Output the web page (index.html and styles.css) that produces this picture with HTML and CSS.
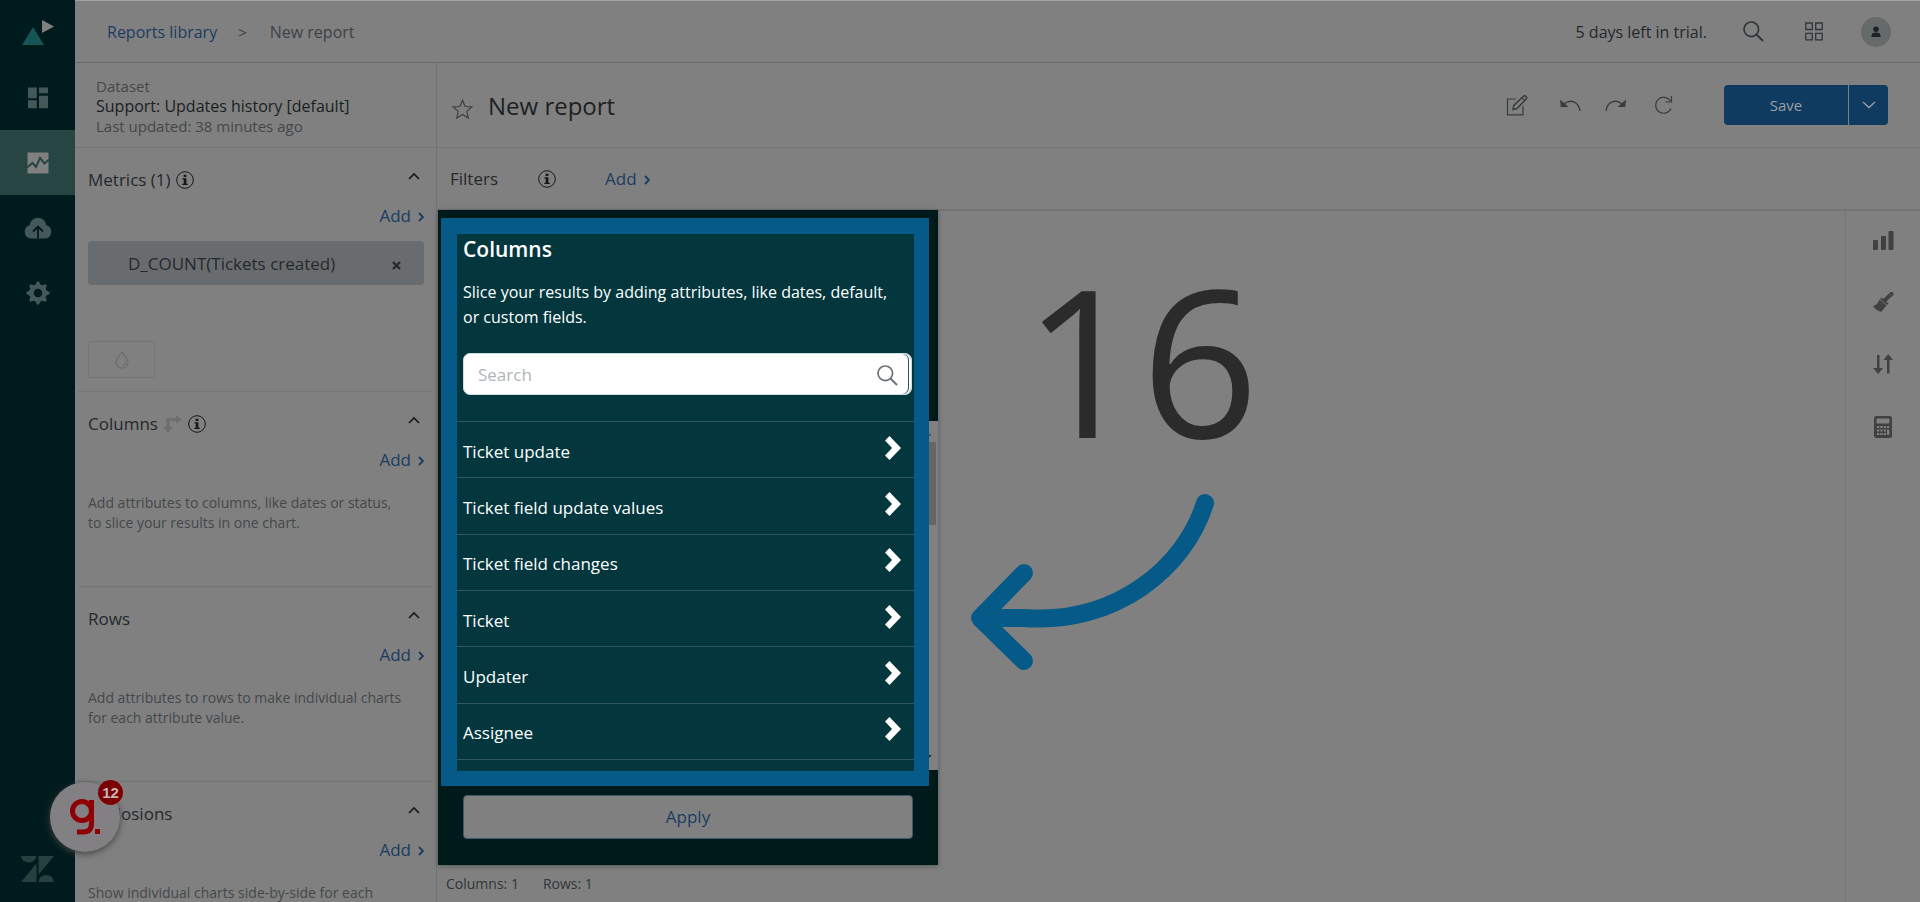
FILE: index.html
```html
<!DOCTYPE html>
<html lang="en">
<head>
<meta charset="utf-8">
<title>New report</title>
<link rel="stylesheet" href="styles.css">
</head>
<body>
<svg class="defs" aria-hidden="true">
  <symbol id="info" viewBox="0 0 18 18"><circle cx="9" cy="9" r="8.3" fill="none" stroke="currentColor"/><path d="M7.6 3.8h2.8v2.3H7.6zM6.4 7.3h4v5.4h1.4v1.2H6.3v-1.2h1.4V8.5H6.4z" fill="currentColor"/></symbol>
  <symbol id="up" viewBox="0 0 12 8"><path d="M1 7l5-5 5 5" fill="none" stroke="currentColor" stroke-width="1.6"/></symbol>
  <symbol id="next" viewBox="0 0 6 10"><path d="M1 1l4 4-4 4" fill="none" stroke="currentColor" stroke-width="1.9"/></symbol>
  <symbol id="bold-next" viewBox="0 0 16 24"><path d="M0 4.5L4.5 0 16 12 4.500 24 0 19.500 7 12z" fill="currentColor"/></symbol>
  <symbol id="search" viewBox="0 0 21 21"><circle cx="8.300" cy="8.300" r="7.300" fill="none" stroke="currentColor" stroke-width="1.700"/><path d="M13.500 13.500l6.500 6.500" stroke="currentColor" stroke-width="2"/></symbol>
</svg>

<nav class="rail" aria-label="Main">
  <a class="rail-logo" href="#" aria-label="Explore"><svg width="32" height="26" viewBox="0 0 32 26"><path d="M0 25L11 7l11 18z" fill="#155556"/><path d="M20 0l12 6.500-12 6.500z" fill="#808080"/></svg></a>
  <a class="rail-item" href="#" aria-label="Dashboards"><svg width="22" height="22" viewBox="0 0 22 22" fill="currentColor"><path d="M1 .5h8.800v10.700H1zM12 .5h9v5.800h-9zM1 13.300h8.800v8H1zM12 8.800h9v12.500h-9z"/></svg></a>
  <a class="rail-item active" href="#" aria-label="Reports"><svg width="22" height="22" viewBox="0 0 22 22"><path d="M.5.5h21v21H.5z" fill="#808080"/><path d="M0 15.500l5.500-4.500 3.500 4 4-9 4.500 5.500 4.500-4" fill="none" stroke="#274543" stroke-width="2"/></svg></a>
  <a class="rail-item" href="#" aria-label="Datasets"><svg width="28" height="22" viewBox="0 0 28 22"><path d="M7 21.500a6.800 6.800 0 0 1-1.300-13.300C6.500 3.500 10 .7 14 .7s7.500 2.800 8.300 7.500A6.800 6.800 0 0 1 21 21.500z" fill="currentColor"/><path d="M14 21.500V10M9 14.500l5-5 5 5" fill="none" stroke="#001b1e" stroke-width="1.800"/></svg></a>
  <a class="rail-item" href="#" aria-label="Settings"><svg width="24" height="24" viewBox="-12 -12 24 24"><g fill="currentColor"><path id="tooth" d="M-3.200-7L-1-11.500h2L3.200-7z"/><use href="#tooth" transform="rotate(45)"/><use href="#tooth" transform="rotate(90)"/><use href="#tooth" transform="rotate(135)"/><use href="#tooth" transform="rotate(180)"/><use href="#tooth" transform="rotate(225)"/><use href="#tooth" transform="rotate(270)"/><use href="#tooth" transform="rotate(315)"/></g><circle r="6.500" fill="none" stroke="currentColor" stroke-width="4.500"/></svg></a>
  <a class="rail-brand" href="#" aria-label="Zendesk"><svg width="33" height="26" viewBox="0 0 33 26" fill="#24403f"><path d="M0 0h15.500a7.750 6.500 0 0 1-15.500 0zM15.500 7.500V26H0zM17.500 0H33L17.500 18.500zM17.500 26a7.750 7 0 0 1 15.500 0z"/></svg></a>
</nav>

<div class="app">
  <header class="topbar">
    <a class="link" href="#">Reports library</a>
    <span class="crumb-sep">&gt;</span>
    <span class="crumb">New report</span>
    <span class="trial">5 days left in trial.</span>
    <button class="icon-btn search-btn" aria-label="Search"><svg width="21" height="21"><use href="#search"/></svg></button>
    <button class="icon-btn apps-btn" aria-label="Products"><svg width="18" height="19" viewBox="0 0 18 19" fill="none" stroke="currentColor" stroke-width="1.300"><path d="M.8 1h6.500v6.500H.8zM10.700 1h6.500v6.500h-6.500zM.8 11.300h6.500v6.500H.8zM10.700 11.300h6.500v6.500h-6.500z"/></svg></button>
    <button class="avatar" aria-label="Profile"><svg width="10" height="12" viewBox="0 0 10 12" fill="#1a2225"><circle cx="5" cy="3.200" r="2.700"/><path d="M.5 11V9.500C.5 7.500 2 6.500 5 6.500s4.500 1 4.500 3V11z"/></svg></button>
  </header>

  <div class="workspace">
    <aside class="sidebar">
      <div class="dataset">
        <span>Dataset</span>
        <span class="dataset-name">Support: Updates history [default]</span>
        <span>Last updated: 38 minutes ago</span>
      </div>
      <section class="shelf">
        <div class="shelf-head"><h2>Metrics (1)</h2><svg class="info" width="18" height="18"><use href="#info"/></svg><button class="icon-btn toggle" aria-label="Collapse metrics"><svg width="12" height="8"><use href="#up"/></svg></button></div>
        <button class="add">Add <svg width="6" height="10"><use href="#next"/></svg></button>
        <div class="chip"><span>D_COUNT(Tickets created)</span><button class="icon-btn remove" aria-label="Remove"><svg width="9" height="9" viewBox="0 0 9 9"><path d="M1 1l7 7M8 1L1 8" stroke="currentColor" stroke-width="2.300"/></svg></button></div>
        <button class="drop" aria-label="Result color"><svg width="14" height="18" viewBox="0 0 14 18" fill="none" stroke="currentColor" stroke-width="1.200"><path d="M7 1C5.500 4 1 7.500 1 11.300a6 5.700 0 0 0 12 0C13 7.500 8.500 4 7 1z"/><path d="M10.500 10.500c0 2-.8 3.500-3 4"/></svg></button>
      </section>
      <section class="shelf">
        <div class="shelf-head"><h2>Columns</h2><svg class="swap" width="20" height="18" viewBox="0 0 20 18"><path d="M5 13V4.500h9" fill="none" stroke="currentColor" stroke-width="3"/><path d="M13 0l6 4.500L13 9zM0 12l5 6 5-6z" fill="currentColor"/></svg><svg class="info" width="18" height="18"><use href="#info"/></svg><button class="icon-btn toggle" aria-label="Collapse columns"><svg width="12" height="8"><use href="#up"/></svg></button></div>
        <button class="add">Add <svg width="6" height="10"><use href="#next"/></svg></button>
        <p class="hint">Add attributes to columns, like dates or status,<br>to slice your results in one chart.</p>
      </section>
      <section class="shelf">
        <div class="shelf-head"><h2>Rows</h2><button class="icon-btn toggle" aria-label="Collapse rows"><svg width="12" height="8"><use href="#up"/></svg></button></div>
        <button class="add">Add <svg width="6" height="10"><use href="#next"/></svg></button>
        <p class="hint">Add attributes to rows to make individual charts<br>for each attribute value.</p>
      </section>
      <section class="shelf">
        <div class="shelf-head"><h2>Explosions</h2><button class="icon-btn toggle" aria-label="Collapse explosions"><svg width="12" height="8"><use href="#up"/></svg></button></div>
        <button class="add">Add <svg width="6" height="10"><use href="#next"/></svg></button>
        <p class="hint">Show individual charts side-by-side for each</p>
      </section>
    </aside>

    <main class="report">
      <div class="titlebar">
        <button class="icon-btn favorite" aria-label="Favorite"><svg width="21" height="20" viewBox="0 0 21 20" fill="none" stroke="currentColor" stroke-width="1.100"><path d="M10.500 1.200l2.600 6.300 6.800.5-5.200 4.400 1.600 6.700-5.800-3.600-5.800 3.600 1.600-6.700L1.100 8l6.800-.5z"/></svg></button>
        <h1>New report</h1>
        <div class="tools">
          <button class="icon-btn" aria-label="Edit"><svg width="22" height="21" viewBox="0 0 22 21" fill="none" stroke="currentColor" stroke-width="1.200"><path d="M10 4H1.500v15.800H17V11"/><path d="M7 14.500l.8-4L17.500 1.200a1.500 1.500 0 0 1 2.100 0l.6.600a1.500 1.500 0 0 1 0 2.100L11 13.500z" stroke-width="1.500"/><path d="M16 2.800l2.800 2.800"/></svg></button>
          <button class="icon-btn undo" aria-label="Undo"><svg width="21" height="13" viewBox="0 0 21 13"><path d="M4 4.800C11-.5 19 3 20 12" fill="none" stroke="currentColor" stroke-width="1.300"/><path d="M0 .5l.8 7.500h7.700z" fill="currentColor"/></svg></button>
          <button class="icon-btn" aria-label="Redo"><svg width="21" height="13" viewBox="0 0 21 13"><path d="M17 4.800C10-.5 2 3 1 12" fill="none" stroke="currentColor" stroke-width="1.300"/><path d="M21 .5l-.8 7.500h-7.700z" fill="currentColor"/></svg></button>
          <button class="icon-btn refresh" aria-label="Refresh"><svg width="18" height="20" viewBox="0 0 18 20" fill="none" stroke="currentColor" stroke-width="1.200"><path d="M16 13.500A8 8 0 1 1 15.500 6M16.500 1v6h-6"/></svg></button>
          <div class="save"><button>Save</button><button class="save-more" aria-label="More save options"><svg width="14" height="8" viewBox="0 0 14 8"><path d="M1 1l6 5.500L13 1" fill="none" stroke="currentColor" stroke-width="1.300"/></svg></button></div>
        </div>
      </div>
      <div class="filters"><span>Filters</span><svg class="info" width="18" height="18"><use href="#info"/></svg><button class="add">Add <svg width="6" height="10"><use href="#next"/></svg></button></div>

      <div class="stage">
        <div class="canvas">
          <div class="kpi">16</div>
          <footer class="counts"><span>Columns: 1</span><span>Rows: 1</span></footer>
        </div>
        <div class="strip">
          <button class="icon-btn" aria-label="Visualization type"><svg width="21" height="20" viewBox="0 0 21 20" fill="currentColor"><rect x="0" y="10" width="5" height="10" rx="1"/><rect x="8" y="6" width="5" height="14" rx="1"/><rect x="15.500" y="1" width="5" height="19" rx="1"/></svg></button>
          <button class="icon-btn" aria-label="Chart configuration"><svg width="21" height="20" viewBox="0 0 21 20"><path d="M11.500 8.500L18.500 2" stroke="currentColor" stroke-width="4" stroke-linecap="round"/><path d="M17 3.300l1-1" stroke="#808080"/><path d="M8.500 5.500l7 6-1.500 1.500-7-6zM6.500 7.500l7 6L8 20C4 18.500 1.500 16.500 0 14c3-.5 5-3 6.500-6.500z" fill="currentColor"/></svg></button>
          <button class="icon-btn" aria-label="Result manipulation"><svg width="21" height="20" viewBox="0 0 21 20" fill="currentColor"><path d="M4 1h2.500v13H10l-4.800 6L0 14h4zM14 19.500h2.500V6H20l-4.800-6L10.500 6H14z"/></svg></button>
          <button class="icon-btn" aria-label="Calculations"><svg width="18" height="22" viewBox="0 0 18 22"><rect width="18" height="22" rx="2.500" fill="currentColor"/><g fill="#808080"><rect x="2.500" y="2.500" width="13" height="5" rx="1"/><path d="M3 10h2.300v2H3zM6.300 10h2.300v2H6.300zM9.700 10H12v2H9.700zM13 10h2.300v2H13zM3 13.500h2.300v2H3zM6.300 13.500h2.300v2H6.300zM9.700 13.500H12v2H9.700zM3 17h2.300v2H3zM6.300 17h2.300v2H6.300zM9.700 17H12v2H9.700zM13 13.500h2.300V19H13z"/></g></svg></button>
        </div>

        <div class="picker" role="dialog" aria-labelledby="picker-title">
          <div class="scrollbar"><span class="tick"></span><span class="thumb"></span><span class="tick down"></span></div>
          <div class="spotlight">
            <h2 id="picker-title">Columns</h2>
            <p>Slice your results by adding attributes, like dates, default,<br>or custom fields.</p>
            <label class="search"><input type="text" placeholder="Search" aria-label="Search"><svg width="21" height="21"><use href="#search"/></svg></label>
            <div class="groups">
              <button>Ticket update<svg width="16" height="24"><use href="#bold-next"/></svg></button>
              <button>Ticket field update values<svg width="16" height="24"><use href="#bold-next"/></svg></button>
              <button>Ticket field changes<svg width="16" height="24"><use href="#bold-next"/></svg></button>
              <button>Ticket<svg width="16" height="24"><use href="#bold-next"/></svg></button>
              <button>Updater<svg width="16" height="24"><use href="#bold-next"/></svg></button>
              <button>Assignee<svg width="16" height="24"><use href="#bold-next"/></svg></button>
            </div>
          </div>
          <button class="apply">Apply</button>
        </div>

        <svg class="arrow" width="245" height="180" viewBox="0 0 245 180" fill="none" stroke="#065a87" stroke-width="18" stroke-linecap="round" stroke-linejoin="round" aria-hidden="true"><path d="M235 10C215 75 145 132 54 125H12M54 80L10 125l44 43"/></svg>
      </div>
    </main>
  </div>
</div>

<button class="guide" aria-label="Guide, 12 items">
  <svg width="30" height="36" viewBox="0 0 30 36" fill="none" stroke="#8e0004" stroke-width="5"><circle cx="12" cy="12" r="9.500"/><path d="M21.500 1v23c0 6-3 9-8 9H7"/><rect x="25" y="30" width="5" height="5" stroke="none" fill="#8e0004"/></svg>
  <span class="badge">12</span>
</button>
</body>
</html>
```
FILE: styles.css
```css
* { box-sizing: border-box; }
body {
  margin: 0;
  height: 100vh;
  display: flex;
  overflow: hidden;
  background: #808080;
  color: #24292c;
  font: 17px/24px "Open Sans", "Noto Sans", sans-serif;
}
h1, h2, p { margin: 0; font-weight: 400; }
h2 { font-size: 17px; }
a { color: inherit; text-decoration: none; }
button { font: inherit; color: inherit; background: none; border: 0; padding: 0; cursor: pointer; }
svg { display: block; flex: none; }
.defs { position: absolute; width: 0; height: 0; }
.icon-btn { display: flex; align-items: center; justify-content: center; }

/* Left rail */
.rail {
  flex: 0 0 75px;
  display: flex;
  flex-direction: column;
  background: #001b1e;
  color: #44585a;
}
.rail-logo { height: 65px; display: flex; justify-content: center; padding-top: 20px; }
.rail-item { height: 65px; display: flex; align-items: center; justify-content: center; }
.rail-item.active { background: #274543; }
.rail-brand { margin-top: auto; padding-bottom: 20px; display: flex; justify-content: center; }

/* Top bar */
.app { flex: 1; min-width: 0; display: flex; flex-direction: column; border-top: 1px solid #a0a0a0; }
.topbar {
  flex: 0 0 62px;
  display: flex;
  align-items: center;
  padding: 0 29px 0 32px;
  border-bottom: 1px solid #676b6c;
  font-size: 16px;
}
.link { color: #1b3c61; }
.crumb-sep { margin: 0 23px 0 21px; font-size: 15px; color: #3c4245; }
.crumb { color: #3c4245; }
.trial { margin-left: auto; }
.search-btn { margin-left: 36px; color: #2f3639; }
.apps-btn { margin-left: 41px; color: #2f3639; }
.avatar {
  margin-left: 38px;
  width: 30px;
  height: 30px;
  display: flex;
  align-items: center;
  justify-content: center;
  border-radius: 50%;
  background: #666a6b;
}

.workspace { flex: 1; min-height: 0; display: flex; }

/* Sidebar */
.sidebar { flex: 0 0 362px; overflow: hidden; border-right: 1px solid #707273; }
.dataset {
  height: 85px;
  display: flex;
  flex-direction: column;
  padding: 13px 21px;
  border-bottom: 1px solid #747676;
  font-size: 15px;
  line-height: 20px;
  color: #43484a;
}
.dataset-name { font-size: 16px; color: #191f22; }
.shelf {
  min-height: 195px;
  margin: 0 4px 0 3px;
  padding: 20px 8px 0 10px;
  border-bottom: 1px solid #747676;
}
.shelf-head { display: flex; align-items: center; gap: 5px; height: 24px; }
.info { color: #14181a; }
.swap { color: #6c6e6f; }
.toggle { margin-left: auto; padding: 0 4px 8px; color: #14181a; }
.add { display: flex; align-items: center; gap: 7px; color: #1b3c61; }
.add svg { margin-top: 2px; }
.shelf .add { margin: 12px 0 0 auto; }
.chip {
  height: 44px;
  margin: 13px 0 56px;
  padding: 1px 23px 0 40px;
  display: flex;
  align-items: center;
  justify-content: space-between;
  border-radius: 4px;
  background: #696c6e;
}
.remove { padding-top: 4px; }
.drop {
  width: 67px;
  height: 37px;
  margin-bottom: 13px;
  display: flex;
  align-items: center;
  justify-content: center;
  border: 1px solid #747676;
  border-radius: 3px;
  color: #696c6d;
}
.hint { margin-top: 21px; font-size: 14px; line-height: 20px; color: #43484a; white-space: nowrap; }

/* Report */
.report { flex: 1; min-width: 0; display: flex; flex-direction: column; }
.titlebar {
  flex: 0 0 85px;
  display: flex;
  align-items: center;
  padding: 0 32px 0 15px;
  border-bottom: 1px solid #707273;
}
.favorite { padding-top: 7px; color: #363c3e; }
h1 { margin-left: 15px; padding-top: 2px; font-size: 24px; line-height: 32px; color: #1d2123; }
.tools { margin-left: auto; display: flex; align-items: center; color: #363c3e; }
.undo { margin: 0 24px 0 32px; }
.refresh { margin: 0 51px 0 29px; }
.save { display: flex; gap: 1px; height: 40px; border-radius: 4px; overflow: hidden; background: #808080; color: #9a9fa3; font-size: 15px; }
.save button { width: 124px; background: #0f3b61; }
.save .save-more { width: 39px; display: flex; align-items: center; justify-content: center; }
.filters {
  flex: 0 0 63px;
  display: flex;
  align-items: center;
  padding-left: 13px;
  border-bottom: 2px solid #747676;
}
.filters .info { margin: 0 49px 0 40px; }

.stage { position: relative; flex: 1; min-height: 0; display: flex; }
.canvas { flex: 1; display: flex; flex-direction: column; }
.kpi { padding-top: 44px; font-size: 206px; line-height: 206px; text-align: center; color: #2b2b2b; }
.counts { margin-top: auto; display: flex; gap: 24px; padding: 0 0 8px 9px; font-size: 14px; line-height: 20px; color: #2f3537; }
.strip {
  flex: 0 0 75px;
  display: flex;
  flex-direction: column;
  align-items: center;
  gap: 42px;
  padding-top: 19px;
  border-left: 1px solid #747676;
  color: #414141;
}

/* Attribute picker */
.picker {
  position: absolute;
  left: 1px;
  top: -1px;
  bottom: 37px;
  width: 500px;
  display: flex;
  flex-direction: column;
  padding: 8px 9px 26px 3px;
  background: #001a1c;
  box-shadow: 0 1px 5px #555;
}
.spotlight {
  position: relative;
  flex: 1;
  display: flex;
  flex-direction: column;
  border: 16px solid #065a87;
  border-right-width: 15px;
  border-bottom-width: 15px;
  padding-bottom: 11px;
  background: #03363d;
  color: #fff;
}
.spotlight h2 { padding: 1px 6px 0; font-size: 21px; line-height: 28px; font-weight: 600; }
.spotlight p { padding: 17px 0 0 6px; font-size: 16px; line-height: 25px; white-space: nowrap; }
.search { position: relative; margin: 23px 2px 26px 6px; }
.search input {
  display: block;
  width: 100%;
  height: 42px;
  padding: 0 50px 0 14px;
  border: 1px solid #cfe0e4;
  border-radius: 7px;
  background: #fff;
  box-shadow: inset -2px 0 0 #fff, inset -3px 0 0 #2c555b;
  font: inherit;
  color: #24292c;
}
.search input::placeholder { color: #aeb4b8; opacity: 1; }
.search svg { position: absolute; right: 14px; top: 12px; color: #6a7074; }
.groups { flex: 1; display: flex; flex-direction: column; border-bottom: 1px solid #35565c; }
.groups button {
  flex: 1;
  display: flex;
  align-items: center;
  justify-content: space-between;
  padding: 4px 13px 0 6px;
  border-top: 1px solid #35565c;
}
.groups svg { margin-bottom: 8px; }
.scrollbar { position: absolute; right: 0; top: 211px; bottom: 95px; width: 16px; background: #808080; }
.tick { position: absolute; right: 6px; top: 11px; border: 4px solid transparent; border-top-width: 0; border-bottom-color: #505354; }
.tick.down { top: auto; bottom: 11px; border-width: 4px 4px 0; border-top-color: #2b2e2f; }
.thumb { position: absolute; right: 2px; top: 21px; width: 13px; height: 83px; background: #666; }
.apply {
  height: 44px;
  margin: 9px 16px 0 22px;
  border: 1px solid #3b5a6b;
  border-radius: 4px;
  background: #808080;
  color: #1b3c61;
}
.arrow { position: absolute; left: 533px; top: 282px; }

/* Floating guide launcher */
.guide {
  position: absolute;
  left: 50px;
  bottom: 50px;
  width: 70px;
  height: 70px;
  display: flex;
  align-items: center;
  justify-content: center;
  border-radius: 50%;
  background: #828083;
  box-shadow: 0 2px 6px #444;
}
.badge {
  position: absolute;
  right: -3px;
  top: -2px;
  width: 25px;
  height: 25px;
  border-radius: 50%;
  background: #7c0003;
  color: #c4b8b8;
  font: bold 15px/25px "Liberation Sans", Arial, sans-serif;
}
```
